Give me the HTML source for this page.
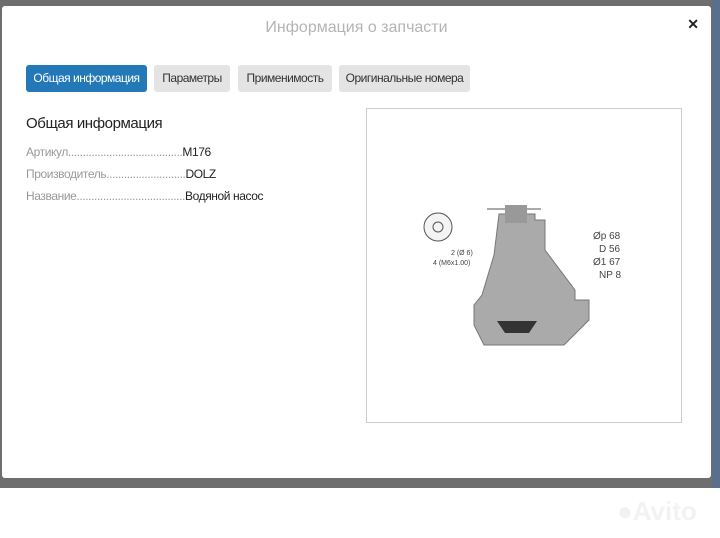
<!DOCTYPE html>
<html><head><meta charset="utf-8"><style>
body{margin:0;width:720px;height:538px;background:#fff;position:relative;overflow:hidden;font-family:"Liberation Sans",sans-serif;}
.ov{position:absolute;left:0;top:0;width:720px;height:488px;background:#6e6e6e;}
.modal{position:absolute;left:2px;top:6px;width:709px;height:472px;background:#fff;border-radius:3px;}
.title{position:absolute;top:13px;width:100%;text-align:center;font-size:16px;color:#b4b4b4;}
.x{position:absolute;right:12px;top:10px;font-size:14px;font-weight:bold;color:#222;}
.tab{position:absolute;top:59px;height:27px;line-height:27px;font-size:12px;letter-spacing:-0.5px;color:#333;background:#e4e4e4;border-radius:3px;text-align:center;}
.act{background:#2378b8;color:#fff;}
h3{position:absolute;left:24px;top:109px;margin:0;font-weight:normal;font-size:15px;letter-spacing:-0.4px;color:#222;}
.row{position:absolute;left:24px;font-size:12px;letter-spacing:-0.4px;color:#999;}
.row b{font-weight:normal;color:#222;}
.img{position:absolute;left:364px;top:102px;width:314px;height:313px;border:1px solid #ccc;}
</style></head><body>
<div class="ov"></div>
<div style="position:absolute;left:712px;top:0;width:8px;height:488px;background:#5a6f8a"></div>
<div class="modal">
<div class="title">Информация о запчасти</div>
<div class="x">✕</div>
<div class="tab act" style="left:24px;width:121px">Общая информация</div>
<div class="tab" style="left:152px;width:76px">Параметры</div>
<div class="tab" style="left:236px;width:94px">Применимость</div>
<div class="tab" style="left:337px;width:131px">Оригинальные номера</div>
<h3>Общая информация</h3>
<div class="row" style="top:139px">Артикул.......................................<b>M176</b></div>
<div class="row" style="top:161px">Производитель...........................<b>DOLZ</b></div>
<div class="row" style="top:183px">Название.....................................<b>Водяной насос</b></div>
<div class="img">
<svg width="314" height="313" viewBox="0 0 314 313">
<g fill="none" stroke="#555" stroke-width="1">
<circle cx="71" cy="118" r="14" fill="#f4f4f4"/><circle cx="71" cy="118" r="5"/>
<line x1="120" y1="100" x2="174" y2="100"/><line x1="120" y1="219" x2="174" y2="219"/>
</g>
<path d="M132 105 h36 v6 h10 v30 l30 40 v10 l14 0 v20 l-25 25 h-80 l-10 -20 v-20 l8 -10 l12 -40z" fill="#aaa" stroke="#777"/>
<rect x="138" y="96" width="22" height="18" fill="#999"/>
<path d="M130 212 h40 l-8 12 h-24z" fill="#333"/>
<g font-size="10" fill="#444" font-family="Liberation Sans,sans-serif">
<text x="226" y="130">Øp 68</text><text x="232" y="143">D 56</text><text x="226" y="156">Ø1 67</text><text x="232" y="169">NP 8</text>
<text x="84" y="146" font-size="7">2 (Ø 6)</text><text x="66" y="156" font-size="7">4 (M6x1.00)</text>
</g></svg>
</div>
</div>
<div style="position:absolute;left:617px;top:496px;font-size:26px;font-weight:bold;color:#f2f2f2;">●Avito</div>
</body></html>
